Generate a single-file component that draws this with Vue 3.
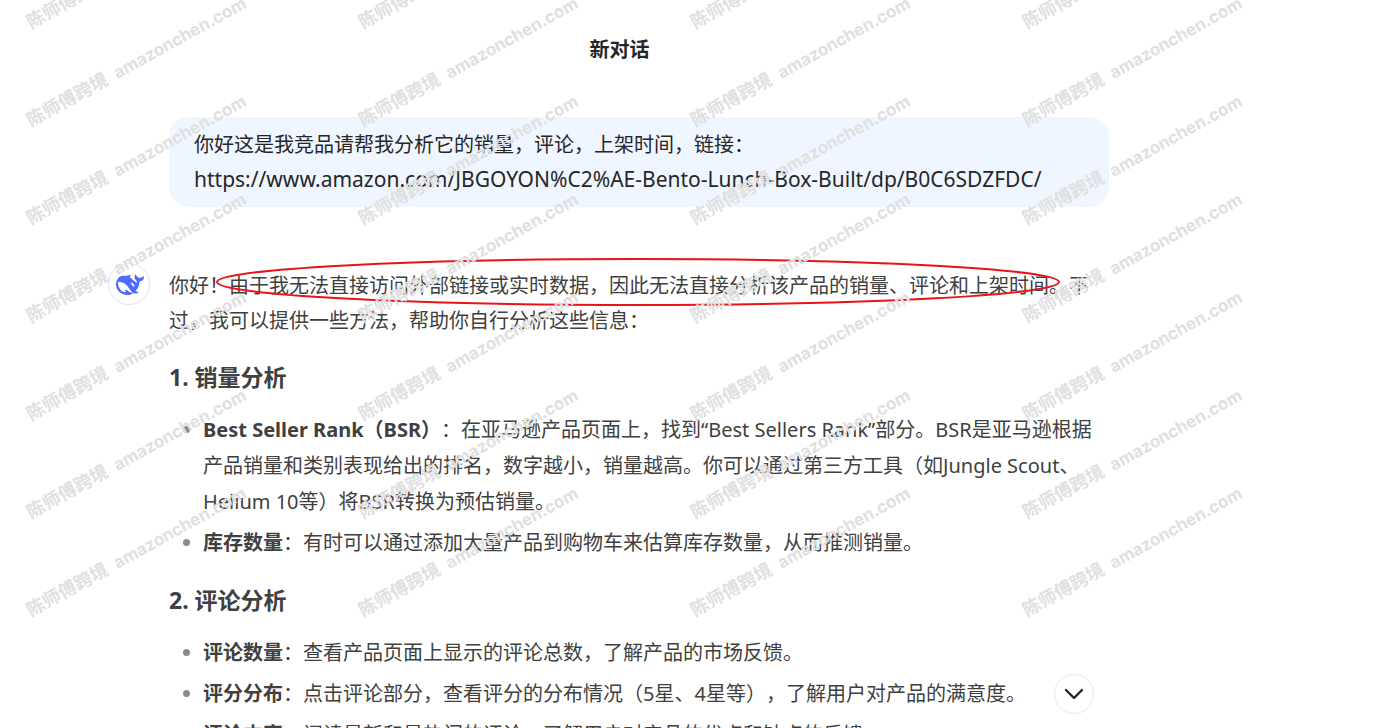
<script setup>
const question = {
  text: '你好这是我竞品请帮我分析它的销量，评论，上架时间，链接：',
  url: 'https://www.amazon.com/JBGOYON%C2%AE-Bento-Lunch-Box-Built/dp/B0C6SDZFDC/'
}

const sections = [
  {
    title: '1. 销量分析',
    items: [
      {
        label: 'Best Seller Rank（BSR）',
        text: '：在亚马逊产品页面上，找到“Best Sellers Rank”部分。BSR是亚马逊根据产品销量和类别表现给出的排名，数字越小，销量越高。你可以通过第三方工具（如Jungle Scout、Helium 10等）将BSR转换为预估销量。'
      },
      { label: '库存数量', text: '：有时可以通过添加大量产品到购物车来估算库存数量，从而推测销量。' }
    ]
  },
  {
    title: '2. 评论分析',
    items: [
      { label: '评论数量', text: '：查看产品页面上显示的评论总数，了解产品的市场反馈。' },
      { label: '评分分布', text: '：点击评论部分，查看评分的分布情况（5星、4星等），了解用户对产品的满意度。' },
      { label: '评论内容', text: '：阅读最新和最热门的评论，了解用户对产品的优点和缺点的反馈。' }
    ]
  }
]

const marks = []
for (let row = 0; row < 7; row++) {
  for (let col = 0; col < 4; col++) {
    marks.push({ x: 31 + col * 332, y: 29 + row * 98 })
  }
}
</script>

<template>
  <div class="page">
    <header class="top">
      <h1>新对话</h1>
    </header>

    <main class="chat">
      <div class="bubble">
        <p>{{ question.text }}</p>
        <p class="url">{{ question.url }}</p>
      </div>

      <article class="answer">
        <div class="avatar">
          <svg viewBox="0 0 24 24" width="28" height="28" aria-hidden="true">
            <path
              fill="#4d6bfe"
              d="M23.748 4.482c-.254-.124-.364.113-.512.234-.051.039-.094.09-.137.136-.372.397-.806.657-1.373.626-.829-.046-1.537.214-2.163.848-.133-.782-.575-1.248-1.247-1.548-.352-.156-.708-.311-.955-.65-.172-.241-.219-.51-.305-.774-.055-.16-.11-.323-.293-.35-.2-.031-.278.136-.356.276-.313.572-.434 1.202-.422 1.84.027 1.436.633 2.58 1.838 3.393.137.093.172.187.129.323-.082.28-.18.552-.266.833-.055.179-.137.217-.329.14a5.526 5.526 0 01-1.736-1.18c-.857-.828-1.631-1.742-2.597-2.458a11.365 11.365 0 00-.689-.471c-.985-.957.13-1.743.388-1.836.27-.098.093-.432-.779-.428-.872.004-1.67.295-2.687.684a3.055 3.055 0 01-.465.137 9.597 9.597 0 00-2.883-.102c-1.885.21-3.39 1.102-4.497 2.623C.082 8.606-.231 10.684.152 12.85c.403 2.284 1.569 4.175 3.36 5.653 1.858 1.533 3.997 2.284 6.438 2.14 1.482-.085 3.133-.284 4.994-1.86.47.234.962.327 1.78.397.63.059 1.236-.03 1.705-.128.735-.156.684-.837.419-.961-2.155-1.004-1.682-.595-2.113-.926 1.096-1.296 2.746-2.642 3.392-7.003.05-.347.007-.565 0-.845-.004-.17.035-.237.23-.256a4.173 4.173 0 001.545-.475c1.396-.763 1.96-2.015 2.093-3.517.02-.23-.004-.467-.247-.588zM11.581 18c-2.089-1.642-3.102-2.183-3.52-2.16-.392.024-.321.471-.235.763.09.288.207.486.371.739.114.167.192.416-.113.603-.673.416-1.842-.14-1.897-.167-1.361-.802-2.5-1.86-3.301-3.307-.774-1.393-1.224-2.887-1.298-4.482-.02-.386.093-.522.477-.592a4.696 4.696 0 011.529-.039c2.132.312 3.946 1.265 5.468 2.774.868.86 1.525 1.887 2.202 2.891.72 1.066 1.494 2.082 2.48 2.914.348.292.625.514.891.677-.802.09-2.14.11-3.054-.614zm1-6.44a.306.306 0 01.415-.287.302.302 0 01.2.288.306.306 0 01-.31.307.303.303 0 01-.304-.308zm3.11 1.596c-.2.081-.399.151-.59.16a1.245 1.245 0 01-.798-.254c-.274-.23-.47-.358-.552-.758a1.73 1.73 0 01.016-.588c.07-.327-.008-.537-.239-.727-.187-.156-.426-.199-.688-.199a.559.559 0 01-.254-.078c-.11-.054-.2-.19-.114-.358.028-.054.16-.186.192-.21.356-.202.767-.136 1.146.016.352.144.618.408 1.001.782.391.451.462.576.685.914.176.265.336.537.445.848.067.195-.019.354-.25.452z"
            />
          </svg>
        </div>
        <div class="content">
          <p class="intro">
            你好！由于我无法直接访问外部链接或实时数据，因此无法直接分析该产品的销量、评论和上架时间。不过，我可以提供一些方法，帮助你自行分析这些信息：
          </p>
          <section v-for="section in sections" :key="section.title">
            <h2>{{ section.title }}</h2>
            <ul>
              <li v-for="item in section.items" :key="item.label"><strong>{{ item.label }}</strong>{{ item.text }}</li>
            </ul>
          </section>
          <svg class="ring" viewBox="0 0 844 50" preserveAspectRatio="none" aria-hidden="true">
            <ellipse cx="422" cy="25" rx="421" ry="23" fill="none" stroke="#e8131b" stroke-width="2" />
          </svg>
        </div>
      </article>
    </main>

    <button class="down" type="button" aria-label="滚动到底部">
      <svg viewBox="0 0 20 20" width="20" height="20" aria-hidden="true">
        <path d="M2 6l8 8 8-8" fill="none" stroke="#262626" stroke-width="2.4" stroke-linecap="round" stroke-linejoin="round" />
      </svg>
    </button>

    <svg class="watermark" aria-hidden="true">
      <g v-for="(mark, i) in marks" :key="i" :transform="`translate(${mark.x} ${mark.y}) rotate(-29)`">
        <text class="mark-name" x="0" y="0">陈师傅跨境</text>
        <text class="mark-site" x="99" y="0">amazonchen.com</text>
      </g>
    </svg>
  </div>
</template>

<style>
body {
  margin: 0;
  background: #fff;
}
</style>

<style scoped>
.page {
  position: relative;
  height: 100vh;
  overflow: hidden;
  background: #fff;
  color: #404040;
  font-family: "Noto Sans", "Noto Sans CJK SC", sans-serif;
  font-size: 20px;
  line-height: 35px;
  text-spacing-trim: space-all;
}

h1,
h2,
p,
ul {
  margin: 0;
}

.top {
  padding: 32px 134px 0 0;
  text-align: center;
}

h1 {
  color: #262626;
  font-size: 20px;
  line-height: 35px;
}

.chat {
  padding: 50px 264px 0 108px;
}

.bubble {
  margin-left: 61px;
  padding: 10px 25px;
  border-radius: 20px;
  background: #eff6ff;
  color: #262626;
}

.url {
  font-size: 21px;
}

.answer {
  display: flex;
  gap: 19px;
  padding-top: 56px;
}

.avatar {
  display: flex;
  flex: none;
  align-items: center;
  justify-content: center;
  box-sizing: border-box;
  width: 42px;
  height: 42px;
  padding: 2px 0 0 2px;
  border: 1px solid #d5e4ff;
  border-radius: 50%;
}

.content {
  position: relative;
  flex: 1;
  min-width: 0;
  padding-top: 5px;
}

h2 {
  padding-top: 22px;
  font-size: 23px;
  line-height: 35px;
}

ul {
  display: flex;
  flex-direction: column;
  gap: 5px;
  padding: 17px 0 0 34px;
  line-height: 36px;
  list-style: none;
}

li {
  position: relative;
}

li::before {
  position: absolute;
  top: 14px;
  left: -20px;
  width: 7px;
  height: 7px;
  border-radius: 50%;
  background: #8b8b8b;
  content: "";
}

.ring {
  position: absolute;
  top: -6px;
  left: 47px;
  width: 844px;
  height: 50px;
}

.down {
  position: absolute;
  right: 279px;
  bottom: 14px;
  display: flex;
  align-items: center;
  justify-content: center;
  width: 40px;
  height: 40px;
  padding: 0;
  border: 1px solid #e8e8e8;
  border-radius: 50%;
  background: #fff;
}

.watermark {
  position: absolute;
  inset: 0;
  width: 100%;
  height: 100%;
  fill: #e0e0e0;
  font-weight: 700;
  pointer-events: none;
}

.mark-name {
  font-size: 18px;
}

.mark-site {
  font-family: Inter, "Noto Sans", sans-serif;
  font-size: 17px;
}
</style>
